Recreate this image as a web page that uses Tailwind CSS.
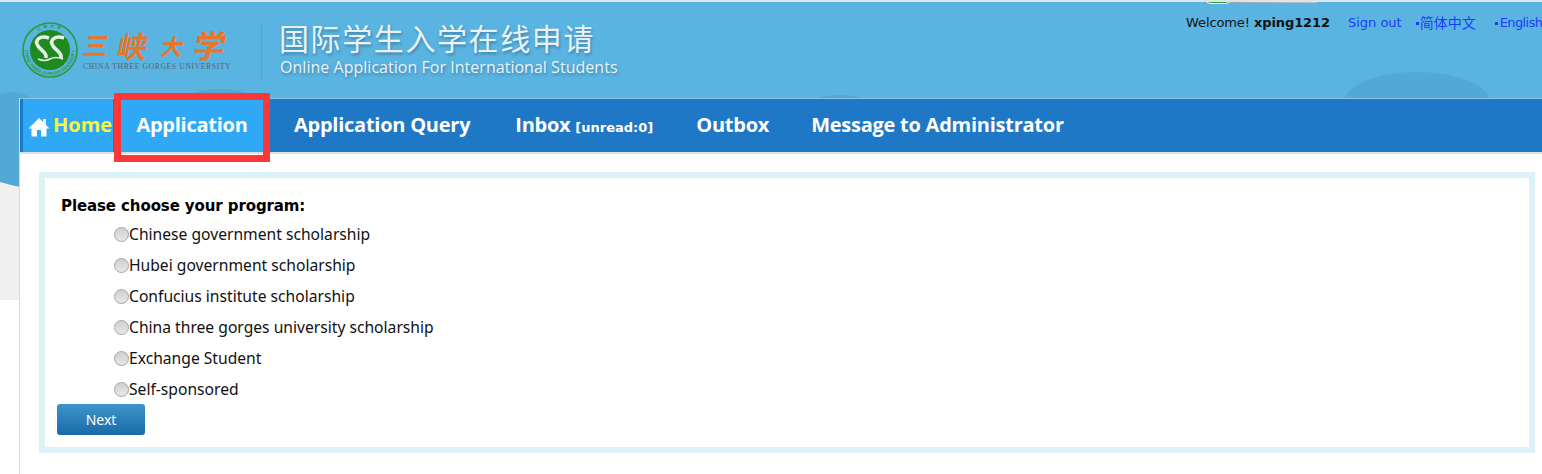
<!DOCTYPE html>
<html lang="en">
<head>
    <meta charset="UTF-8">
    <title>Online Application For International Students</title>
    <script src="https://cdn.jsdelivr.net/npm/@tailwindcss/browser@4"></script>
</head>
<body class="bg-white h-[474px] w-[1542px] overflow-hidden font-['DejaVu_Sans',sans-serif]">

    <!-- Header -->
    <header class="relative h-[98px] bg-[#5ab4e2] border-t-2 border-[#dfe3ea] overflow-hidden">
        <!-- background bumps -->
        <div class="absolute left-[1344px] top-[70px] w-[146px] h-[60px] rounded-[50%] bg-[#52a9d5]"></div>
        <div class="absolute -left-[8px] top-[90px] w-[40px] h-[20px] rounded-[50%] bg-[#52a9d5]"></div>
        <div class="absolute left-[188px] top-[87px] w-[64px] h-[20px] rounded-[50%] bg-[#52a9d5]"></div>
        <div class="absolute left-[808px] top-[93px] w-[64px] h-[20px] rounded-[50%] bg-[#52a9d5]"></div>
        <div class="absolute left-[1203px] -top-[2px] w-[114px] h-[3px] bg-gradient-to-r from-[#8d9aa3] to-[#b9c6cf]"></div>
        <div class="absolute left-[1204px] -top-[12px] w-[28px] h-[14px] rounded-full bg-[#2f9e44] border border-white"></div>

        <div class="flex items-start">
            <div class="flex items-center pl-[21px] pt-[19px]">
                <svg class="w-[58px] h-[58px]" viewBox="0 0 58 58">
                    <defs>
                        <path id="ring-bottom" d="M5.3 21 A25 25 0 1 0 52.7 21"/>
                        <path id="ring-top" d="M18 9.4 A22.5 22.5 0 0 1 40 9.4"/>
                    </defs>
                    <circle cx="29" cy="29" r="27" fill="none" stroke="#2a9a3a" stroke-width="1.6"/>
                    <circle cx="29" cy="29" r="20" fill="#1f8a1f"/>
                    <text font-size="4.4" font-weight="700" fill="#2a9a3a" font-family="Liberation Sans, sans-serif"><textPath href="#ring-bottom" startOffset="50%" text-anchor="middle">CHINA THREE GORGES UNIVERSITY</textPath></text>
                    <text font-size="4" font-weight="700" fill="#2a9a3a" letter-spacing="2.5" font-family="Noto Sans CJK SC, sans-serif"><textPath href="#ring-top" startOffset="50%" text-anchor="middle">三峡大学</textPath></text>
                    <path d="M28 17 C19 14 13 19 17 25 C20 30 26 31 25 37 M43 17 C34 14 28 19 32 25 C35 30 41 31 40 37" fill="none" stroke="#e4f1e4" stroke-width="3.6"/>
                    <path d="M17 38 Q24 41 29 38 T42 38" fill="none" stroke="#e4f1e4" stroke-width="1.6"/>
                </svg>
                <div class="w-[150px] ml-[5px] -mt-[2px]">
                    <div class="flex items-center h-[36px] text-[#ec7428] font-bold font-['Noto_Sans_CJK_SC',sans-serif] -skew-x-12">
                        <span class="text-[25px] w-[34px]">三</span>
                        <span class="text-[30px] w-[44px]">峡</span>
                        <span class="text-[22px] w-[32px]">大</span>
                        <span class="text-[32px] -mt-[3px]">学</span>
                    </div>
                    <div class="-ml-[1px] text-[7.5px] leading-[8px] tracking-[0.7px] text-[#52636f] font-['Liberation_Serif',serif] whitespace-nowrap">CHINA THREE GORGES UNIVERSITY</div>
                </div>
            </div>
            <div class="ml-[27px] mt-[22px] w-px h-[54px] bg-[#4ea3cf]"></div>
            <div class="ml-[17px] mt-[15px] text-[#e8f3f8] [text-shadow:1px_2px_3px_rgba(40,80,110,0.5)]">
                <div class="text-[30px] leading-[40px] tracking-[1.6px] font-['Noto_Sans_CJK_SC',sans-serif]">国际学生入学在线申请</div>
                <div class="text-[16px] leading-[20px] tracking-[0.03px] ml-[1px] font-['Open_Sans',sans-serif]">Online Application For International Students</div>
            </div>
        </div>

        <div class="absolute left-[1186px] top-[12px] flex items-center text-[13px] leading-[18px] whitespace-nowrap">
            <span class="text-[#111] tracking-[-0.1px]">Welcome! <b>xping1212</b></span>
            <a class="ml-[18px] text-[#1b3df5]">Sign out</a>
            <span class="ml-[14px] w-[3px] h-[3px] bg-[#1b3df5]"></span>
            <a class="ml-[1px] -mt-[2px] text-[14px] text-[#1b3df5] font-['Noto_Sans_CJK_SC',sans-serif]">简体中文</a>
            <span class="ml-[19px] w-[3px] h-[3px] bg-[#1b3df5]"></span>
            <a class="ml-[2px] text-[#1b3df5] tracking-[-0.6px]">English</a>
        </div>
    </header>

    <div class="flex h-[376px]">
        <!-- Left strip of the page background -->
        <svg class="w-[20px] h-[202px] shrink-0" viewBox="0 0 20 202">
            <rect width="20" height="202" fill="#f0f0f0"/>
            <path d="M0 0 H20 V89 Q10 87 0 84 Z" fill="#52a9d5"/>
        </svg>

        <div class="flex-1 min-w-0 border-l border-[#d8d8d8] -ml-px">
            <!-- Nav -->
            <nav class="relative h-[54px] bg-[#1f78c6] flex items-center text-white font-bold text-[20px] tracking-[-0.25px] whitespace-nowrap font-['Open_Sans',sans-serif] border-t border-[#8fc4e6]">
                <div class="flex items-center h-full ml-[3px] w-[90px] bg-[#2fa9f5] pl-[5px] text-[#f7f73c] tracking-normal">
                    <svg class="w-[22px] h-[20px] mt-[2px]" viewBox="0 0 22 20"><path d="M11 1 L15 5 V2 H18 V8 L21.5 11.5 H18.5 V19.5 H13 V13 H9 V19.5 H3.5 V11.5 H0.5 Z" fill="#fff"/></svg>
                    <span class="ml-[3px] -mt-[2px]">Home</span>
                </div>
                <a class="h-full w-[150px] ml-[4px] pb-[2px] flex items-center justify-center bg-[#2fa9f5]">Application</a>
                <a class="ml-[27px] -mt-[2px]">Application Query</a>
                <a class="ml-[45px] -mt-[2px]">Inbox <span class="text-[13px] tracking-normal font-['DejaVu_Sans',sans-serif]">[unread:0]</span></a>
                <a class="ml-[43px] -mt-[2px]">Outbox</a>
                <a class="ml-[42px] -mt-[2px]">Message to Administrator</a>
                <div class="absolute left-[94px] -top-[6px] w-[156px] h-[69px] border-[7px] border-[#fb3737]"></div>
            </nav>
            <div class="h-[2px] bg-[#dedede]"></div>

            <!-- Application form -->
            <main class="ml-[19px] mr-[7px] mt-[18px] h-[281px] border-[6px] border-[#dcf2f8] pl-[16px] pt-[17px]">
                <p class="text-[15px] leading-[22px] tracking-[-0.1px] font-bold text-black">Please choose your program:</p>
                <div class="ml-[53px] mt-[2px] text-[15.65px] text-[#111] font-['Noto_Sans',sans-serif]">
                    <label class="flex items-center h-[31px]"><span class="w-[15px] h-[15px] rounded-full border border-[#a5a5a5] bg-gradient-to-b from-[#cfcfcf] to-[#e8e8e8]"></span>Chinese government scholarship</label>
                    <label class="flex items-center h-[31px]"><span class="w-[15px] h-[15px] rounded-full border border-[#a5a5a5] bg-gradient-to-b from-[#cfcfcf] to-[#e8e8e8]"></span>Hubei government scholarship</label>
                    <label class="flex items-center h-[31px]"><span class="w-[15px] h-[15px] rounded-full border border-[#a5a5a5] bg-gradient-to-b from-[#cfcfcf] to-[#e8e8e8]"></span>Confucius institute scholarship</label>
                    <label class="flex items-center h-[31px]"><span class="w-[15px] h-[15px] rounded-full border border-[#a5a5a5] bg-gradient-to-b from-[#cfcfcf] to-[#e8e8e8]"></span>China three gorges university scholarship</label>
                    <label class="flex items-center h-[31px]"><span class="w-[15px] h-[15px] rounded-full border border-[#a5a5a5] bg-gradient-to-b from-[#cfcfcf] to-[#e8e8e8]"></span>Exchange Student</label>
                    <label class="flex items-center h-[31px]"><span class="w-[15px] h-[15px] rounded-full border border-[#a5a5a5] bg-gradient-to-b from-[#cfcfcf] to-[#e8e8e8]"></span>Self-sponsored</label>
                </div>
                <button class="-ml-[4px] -mt-[1px] block w-[88px] h-[31px] rounded-[3px] bg-gradient-to-b from-[#3f93cd] to-[#186ba6] text-white text-[14px] font-['Noto_Sans',sans-serif]">Next</button>
            </main>
        </div>
    </div>
</body>
</html>
